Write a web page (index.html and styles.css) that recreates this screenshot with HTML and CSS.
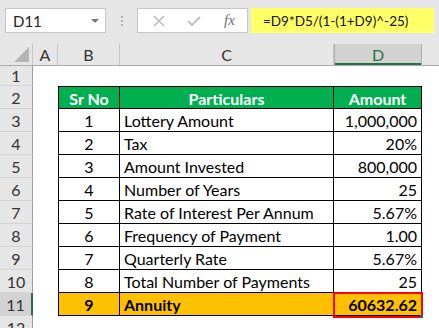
FILE: index.html
```html
<!DOCTYPE html>
<html lang="en">
<head>
  <meta charset="UTF-8">
  <title>Annuity</title>
  <link rel="stylesheet" href="styles.css">
</head>
<body>
  <div class="sheet">
    <div class="toolbar">
      <div class="namebox">
        <span>D11</span>
        <span class="caret"></span>
      </div>
      <div class="grip"><i></i><i></i><i></i></div>
      <div class="fxbox">
        <svg class="ico" width="14" height="14" viewBox="0 0 14 14">
          <path d="M2 2 L12 12 M12 2 L2 12" stroke="#bdbdbd" stroke-width="1.6" fill="none"/>
        </svg>
        <svg class="ico" width="16" height="14" viewBox="0 0 16 14">
          <path d="M2 7 L6 11 L14 3" stroke="#bdbdbd" stroke-width="1.8" fill="none"/>
        </svg>
        <span class="fx">fx</span>
      </div>
      <div class="formula">=D9*D5/(1-(1+D9)^-25)</div>
    </div>

    <div class="row colheads">
      <div class="corner"><span class="tri"></span></div>
      <div class="ch">A</div>
      <div class="ch">B</div>
      <div class="ch">C</div>
      <div class="ch sel">D</div>
      <div class="ch last"></div>
    </div>

    <div class="row first">
      <div class="rh">1</div>
      <div></div><div></div><div></div><div></div><div></div>
    </div>

    <div class="row data head">
      <div class="rh">2</div>
      <div></div>
      <div class="t b mid">Sr No</div>
      <div class="t mid">Particulars</div>
      <div class="t mid r">Amount</div>
      <div></div>
    </div>

    <div class="row data">
      <div class="rh">3</div>
      <div></div>
      <div class="t b mid">1</div>
      <div class="t">Lottery Amount</div>
      <div class="t num r">1,000,000</div>
      <div></div>
    </div>

    <div class="row data">
      <div class="rh">4</div>
      <div></div>
      <div class="t b mid">2</div>
      <div class="t">Tax</div>
      <div class="t num r">20%</div>
      <div></div>
    </div>

    <div class="row data">
      <div class="rh">5</div>
      <div></div>
      <div class="t b mid">3</div>
      <div class="t">Amount Invested</div>
      <div class="t num r">800,000</div>
      <div></div>
    </div>

    <div class="row data">
      <div class="rh">6</div>
      <div></div>
      <div class="t b mid">4</div>
      <div class="t">Number of Years</div>
      <div class="t num r">25</div>
      <div></div>
    </div>

    <div class="row data">
      <div class="rh">7</div>
      <div></div>
      <div class="t b mid">5</div>
      <div class="t">Rate of Interest Per Annum</div>
      <div class="t num r">5.67%</div>
      <div></div>
    </div>

    <div class="row data">
      <div class="rh">8</div>
      <div></div>
      <div class="t b mid">6</div>
      <div class="t">Frequency of Payment</div>
      <div class="t num r">1.00</div>
      <div></div>
    </div>

    <div class="row data">
      <div class="rh">9</div>
      <div></div>
      <div class="t b mid">7</div>
      <div class="t">Quarterly Rate</div>
      <div class="t num r">5.67%</div>
      <div></div>
    </div>

    <div class="row data">
      <div class="rh">10</div>
      <div></div>
      <div class="t b mid">8</div>
      <div class="t">Total Number of Payments</div>
      <div class="t num r">25</div>
      <div></div>
    </div>

    <div class="row data total">
      <div class="rh sel">11</div>
      <div></div>
      <div class="t b mid">9</div>
      <div class="t">Annuity</div>
      <div class="t num r">60632.62</div>
      <div></div>
    </div>

    <div class="row">
      <div class="rh">12</div>
      <div></div><div></div><div></div><div></div><div></div>
    </div>

    <div class="selection"><span class="handle"></span></div>
  </div>
</body>
</html>
```

FILE: styles.css
```css
body {
  margin: 0;
  overflow: hidden;
  font-family: Lato, "Liberation Sans", sans-serif;
  font-size: 16px;
  color: #000;
}
.sheet {
  position: relative;
  width: 439px;
  height: 328px;
  overflow: hidden;
  background: #fff;
}
.toolbar {
  height: 44px;
  background: #e6e6e6;
  display: flex;
  align-items: flex-start;
  padding-top: 8px;
  box-sizing: border-box;
}
.namebox {
  margin-left: 5px;
  width: 101px;
  height: 25px;
  box-sizing: border-box;
  background: #fff;
  border: 1px solid #c6c6c6;
  display: flex;
  align-items: center;
  justify-content: space-between;
  padding: 0 6px 0 7px;
  font-size: 15px;
  color: #222;
}
.caret {
  width: 0;
  height: 0;
  border-left: 4px solid transparent;
  border-right: 4px solid transparent;
  border-top: 4px solid #777;
}
.grip {
  width: 31px;
  height: 25px;
  display: flex;
  flex-direction: column;
  align-items: center;
  justify-content: center;
  gap: 2px;
}
.grip i {
  width: 2px;
  height: 2px;
  background: #b0b0b0;
}
.fxbox {
  width: 111px;
  height: 25px;
  box-sizing: border-box;
  background: #fff;
  border: 1px solid #c6c6c6;
  display: flex;
  align-items: center;
  padding-left: 14px;
  gap: 20px;
}
.fx {
  font-family: "Liberation Serif", serif;
  font-style: italic;
  font-size: 15px;
  color: #6f6f6f;
  margin-left: 2px;
}
.formula {
  margin-left: 3px;
  width: 183px;
  height: 25px;
  background: #ffff66;
  display: flex;
  align-items: center;
  padding-left: 12px;
  box-sizing: border-box;
  font-size: 13.5px;
  color: #111;
}

.row {
  display: grid;
  grid-template-columns: 33px 25px 62px 214px 88px 1fr;
  height: 23px;
}
.colheads {
  height: 22px;
  background: #e6e6e6;
  border-bottom: 1px solid #ababab;
  box-sizing: border-box;
}
.corner {
  position: relative;
  border-right: 1px solid #c6c6c6;
}
.tri {
  position: absolute;
  right: 3px;
  bottom: 3px;
  width: 0;
  height: 0;
  border-left: 15px solid transparent;
  border-bottom: 15px solid #b4b4b4;
}
.ch {
  display: flex;
  align-items: center;
  justify-content: center;
  border-right: 1px solid #c6c6c6;
  color: #333;
  font-size: 16px;
}
.ch.sel {
  background: #d2d2d2;
  border-left: 1px solid #ababab;
  border-right: 1px solid #ababab;
  box-shadow: inset 0 -2px 0 #217346;
  color: #217346;
}
.ch.last {
  border-right: none;
}
.first {
  height: 20px;
}
.rh {
  background: #e6e6e6;
  border-right: 1px solid #9e9e9e;
  border-bottom: 1px solid #d4d4d4;
  display: flex;
  align-items: center;
  justify-content: center;
  color: #333;
  font-size: 16px;
}
.rh.sel {
  background: #d2d2d2;
  border-right: 2px solid #217346;
}

.t {
  border-right: 1px solid #000;
  border-bottom: 1px solid #000;
  display: flex;
  align-items: center;
  padding: 1px 4px 0;
  white-space: nowrap;
  overflow: hidden;
}
.t.b {
  border-left: 1px solid #000;
}
.head .t {
  border-top: 1px solid #000;
  background: #00b050;
  color: #fff;
  font-weight: bold;
}
.mid {
  justify-content: center;
}
.num {
  justify-content: flex-end;
}
.total .t {
  background: #ffc000;
  font-weight: bold;
}

.selection {
  position: absolute;
  left: 333px;
  top: 292px;
  width: 90px;
  height: 26px;
  box-sizing: border-box;
  border: 2px solid #ff0000;
}
.handle {
  position: absolute;
  right: -2px;
  bottom: -2px;
  width: 3px;
  height: 3px;
  background: #217346;
}
```
